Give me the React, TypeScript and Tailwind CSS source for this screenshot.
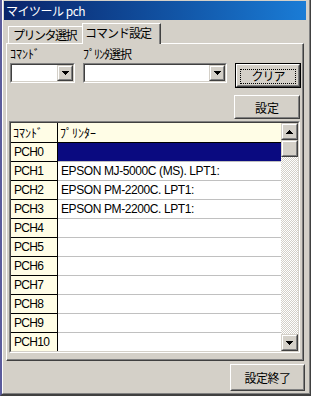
import React from "react";

function DownTri() {
  return (
    <svg width="7" height="4" viewBox="0 0 7 4" shapeRendering="crispEdges">
      <polygon points="0,0 7,0 4,4 3,4" fill="#000" />
    </svg>
  );
}
function UpTri() {
  return (
    <svg width="7" height="4" viewBox="0 0 7 4" shapeRendering="crispEdges">
      <polygon points="3,0 4,0 7,4 0,4" fill="#000" />
    </svg>
  );
}

function SmallRaised({ className, children }: { className: string; children?: React.ReactNode }) {
  return (
    <div className={`border border-t-[#d4d0c8] border-l-[#d4d0c8] border-b-[#404040] border-r-[#404040] bg-[#d4d0c8] ${className}`}>
      <div className="w-full h-full border border-t-white border-l-white border-b-[#808080] border-r-[#808080] flex items-center justify-center">
        {children}
      </div>
    </div>
  );
}

function Button({ className, children }: { className: string; children?: React.ReactNode }) {
  return (
    <div className={`border border-t-white border-l-white border-b-[#404040] border-r-[#404040] bg-[#d4d0c8] ${className}`}>
      <div className="w-full h-full border border-t-[#d4d0c8] border-l-[#d4d0c8] border-b-[#808080] border-r-[#808080] flex items-center justify-center leading-none pt-[1px]">
        {children}
      </div>
    </div>
  );
}

function Combo({ className }: { className: string }) {
  return (
    <div className={`border border-t-[#808080] border-l-[#808080] border-b-white border-r-white ${className}`}>
      <div className="w-full h-full border border-t-[#404040] border-l-[#404040] border-b-[#d4d0c8] border-r-[#d4d0c8] bg-white flex justify-end">
        <SmallRaised className="w-[16px] h-full">
          <DownTri />
        </SmallRaised>
      </div>
    </div>
  );
}

const rows = [
  { c: "PCH0", p: "", sel: true },
  { c: "PCH1", p: "EPSON MJ-5000C (MS). LPT1:" },
  { c: "PCH2", p: "EPSON PM-2200C. LPT1:" },
  { c: "PCH3", p: "EPSON PM-2200C. LPT1:" },
  { c: "PCH4", p: "" },
  { c: "PCH5", p: "" },
  { c: "PCH6", p: "" },
  { c: "PCH7", p: "" },
  { c: "PCH8", p: "" },
  { c: "PCH9", p: "" },
  { c: "PCH10", p: "" },
];

const LAT = "font-[family-name:Liberation_Sans,sans-serif] text-[12px] tracking-[-0.4px]";
const LATC = "font-[family-name:Liberation_Sans,sans-serif] text-[12px] tracking-[-0.7px]";

export default function App() {
  return (
    <div className="w-[311px] h-[396px] bg-[#d4d0c8] border-l-2 border-l-[#5b5b9c] border-r border-r-[#404040] border-b-2 border-b-[#404040] font-[family-name:Noto_Sans_CJK_JP,sans-serif] text-[12px] text-black overflow-hidden">
      <div className="w-full h-full border-l border-l-white border-r border-r-[#808080] border-b border-b-[#808080] pl-[1px] pr-[3px] pt-[1px] flex flex-col">
        {/* title bar */}
        <div className="h-[19px] shrink-0 bg-gradient-to-r from-[#0a246a] to-[#1a7cd6] text-white flex items-center pl-[2px] text-[12px] leading-none tracking-[-0.5px]">
          マイツール pch
        </div>

        {/* tabs */}
        <div className="h-[23px] shrink-0 flex items-end pl-[4px] relative z-10">
          <div className="h-[17px] w-[74px] border-t border-l border-t-white border-l-white bg-[#d4d0c8] flex items-center pl-[4px] tracking-[-1.5px] leading-none">
            プリンタ選択
          </div>
          <div className="h-[21px] w-[79px] -mb-[1px] border-t border-l border-r border-t-white border-l-white border-r-[#404040] bg-[#d4d0c8]">
            <div className="w-full h-full border-r border-r-[#808080] flex items-start pt-[3px] pl-[2px] tracking-[-1px] leading-none">
              コマンド設定
            </div>
          </div>
        </div>

        {/* panel */}
        <div className="h-[318px] shrink-0 mx-[2px] border-t border-l border-r border-b border-t-white border-l-white border-r-[#404040] border-b-[#404040]">
          <div className="w-full h-full border-r border-b border-r-[#808080] border-b-[#808080] flex flex-col">
            {/* top section */}
            <div className="h-[77px] shrink-0 flex">
              <div className="ml-[3px] w-[65px] pt-[2px] flex flex-col">
                <div className="h-[15px] leading-[15px] text-[12px]">ｺﾏﾝﾄﾞ</div>
                <Combo className="mt-[2px] w-[65px] h-[20px]" />
              </div>
              <div className="ml-[8px] w-[144px] pt-[2px] flex flex-col">
                <div className="h-[15px] leading-[15px] text-[12px] tracking-[-1px]">ﾌﾟﾘﾝﾀ選択</div>
                <Combo className="mt-[2px] w-[144px] h-[20px]" />
              </div>
              <div className="ml-auto pt-[19px] flex flex-col items-end">
                <div className="mr-[1px] w-[66px] h-[25px] border border-black">
                  <Button className="w-full h-full">
                    <div className="w-[56px] h-[15px] border border-dotted border-black flex items-center justify-center tracking-[-1px]">
                      クリア
                    </div>
                  </Button>
                </div>
                <Button className="mt-[7px] mr-[2px] w-[66px] h-[24px]">設定</Button>
              </div>
            </div>

            {/* grid */}
            <div className="ml-[2px] w-[291px] h-[232px] shrink-0 border border-t-[#808080] border-l-[#808080] border-b-white border-r-white">
              <div className="w-full h-full border border-t-[#404040] border-l-[#404040] border-b-[#d4d0c8] border-r-[#d4d0c8] flex overflow-hidden bg-white">
                <div className="w-[270px] flex flex-col overflow-hidden">
                  <div className="h-[20px] shrink-0 flex bg-[#fffde6] border-b border-b-black">
                    <div className="w-[47px] border-r border-r-black pl-[2px] leading-[19px]">ｺﾏﾝﾄﾞ</div>
                    <div className="flex-1 pl-[2px] leading-[19px]">ﾌﾟﾘﾝﾀｰ</div>
                  </div>
                  {rows.map((r) => (
                    <div key={r.c} className="h-[19px] shrink-0 flex">
                      <div className={`w-[47px] bg-[#fffde6] border-r border-b border-r-black border-b-black pl-[3px] leading-[18px] ${LATC}`}>
                        {r.c}
                      </div>
                      <div className={`flex-1 border-b border-b-[#c0c0c0] pl-[3px] leading-[18px] whitespace-nowrap ${LAT} ${r.sel ? "bg-[#0a0a80]" : "bg-white"}`}>
                        {r.p}
                      </div>
                    </div>
                  ))}
                </div>
                <div className="w-[17px] flex flex-col">
                  <SmallRaised className="w-[17px] h-[17px] shrink-0">
                    <UpTri />
                  </SmallRaised>
                  <SmallRaised className="w-[17px] h-[17px] shrink-0" />
                  <div className="flex-1 bg-[repeating-conic-gradient(#d4d0c8_0%_25%,#ffffff_0%_50%)] bg-[length:2px_2px]" />
                  <SmallRaised className="w-[17px] h-[17px] shrink-0">
                    <DownTri />
                  </SmallRaised>
                </div>
              </div>
            </div>
          </div>
        </div>

        {/* footer */}
        <div className="flex justify-end mt-[3px] mr-[1px]">
          <Button className="w-[75px] h-[27px] tracking-[-0.5px]">設定終了</Button>
        </div>
      </div>
    </div>
  );
}
